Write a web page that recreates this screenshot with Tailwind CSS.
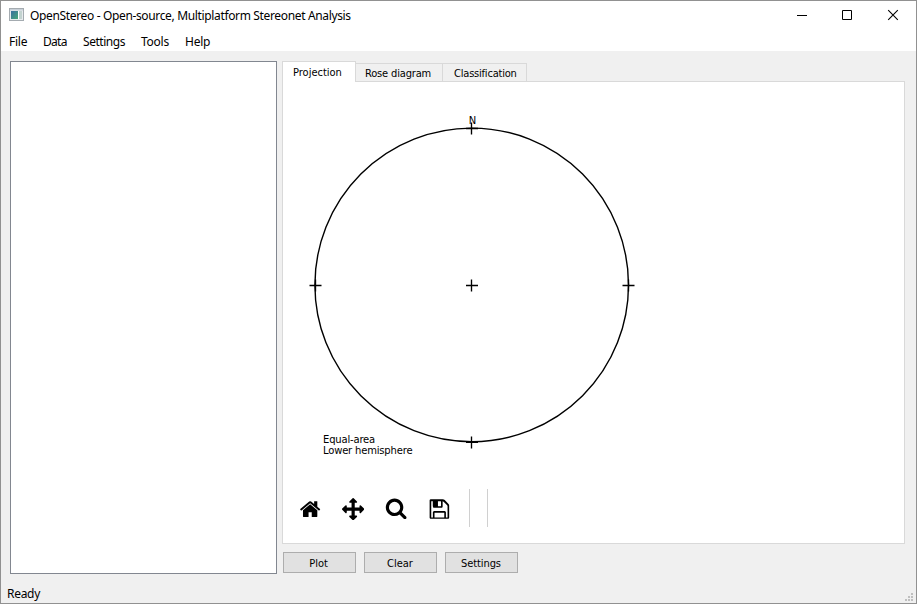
<!DOCTYPE html>
<html lang="en">
<head>
<meta charset="utf-8">
<title>OpenStereo</title>
<script src="https://cdn.jsdelivr.net/npm/@tailwindcss/browser@4"></script>
</head>
<body class="w-[917px] h-[604px] overflow-hidden">
<div class="relative w-[917px] h-[604px] bg-[#f0f0f0] border border-[#919191] flex flex-col text-black font-['Noto_Sans','Open_Sans',sans-serif] text-[12px] whitespace-nowrap">
  <header class="h-[30px] shrink-0 bg-white flex items-center justify-between pl-2">
    <div class="flex items-center">
      <svg class="w-[15px] h-[13px] mr-[6px] -mt-[3px]" viewBox="0 0 15 13">
        <defs><linearGradient id="g" x1="0" y1="0" x2="1" y2="1"><stop offset="0" stop-color="#3a6ea0"/><stop offset="1" stop-color="#48a878"/></linearGradient></defs>
        <rect x=".5" y=".5" width="14" height="12" fill="#e8ebee" stroke="#a4abb0"/>
        <rect x="1" y="1" width="13" height="1.5" fill="#c8d0d8"/>
        <rect x="2" y="3" width="7" height="8" fill="url(#g)"/>
        <rect x="9" y="3" width="1" height="8" fill="#fff"/>
        <rect x="10" y="3" width="3" height="8" fill="#c3d3d0"/>
      </svg>
      <h1 class="text-[12px] leading-4 tracking-[-0.35px]">OpenStereo - Open-source, Multiplatform Stereonet Analysis</h1>
    </div>
    <div class="flex h-full">
      <svg class="w-[46px] h-[30px]" viewBox="0 0 46 30"><path d="M19 14.5h10" stroke="#000"/></svg>
      <svg class="w-[46px] h-[30px]" viewBox="0 0 46 30"><path d="M18.5 9.5h9v9h-9z" fill="none" stroke="#000"/></svg>
      <svg class="w-[46px] h-[30px]" viewBox="0 0 46 30"><path d="M18.2 9.2l9.6 9.6M27.8 9.2l-9.6 9.6" stroke="#000" stroke-width="1.1"/></svg>
    </div>
  </header>
  <nav class="h-[20px] shrink-0 bg-white flex items-center pl-2 pt-[2px] gap-4 leading-4 tracking-[-0.25px]">
    <span class="w-[18px]">File</span><span class="w-[24px] tracking-[-0.7px]">Data</span><span class="w-[42px] tracking-[-0.45px]">Settings</span><span class="w-[28px]">Tools</span><span>Help</span>
  </nav>
  <main class="flex pt-[10px] pl-[9px] h-[523px] shrink-0">
    <section class="w-[267px] h-[513px] bg-white border border-[#828790] mr-[5px]"></section>
    <section class="w-[623px] flex flex-col font-['DejaVu_Sans_Condensed','DejaVu_Sans',sans-serif] text-[11px]">
      <div class="flex items-end h-[21px] -mb-px relative leading-[14px]">
        <div class="w-[74px] h-[21px] bg-white border border-b-0 border-[#d9d9d9] pl-[10px] pt-[4px]">Projection</div>
        <div class="w-[87px] h-[18px] mb-px border-t border-r border-[#d9d9d9] pl-[9px] pt-[3px] tracking-[-0.16px]">Rose diagram</div>
        <div class="w-[84px] h-[18px] mb-px border-t border-r border-[#d9d9d9] pl-[11px] pt-[3px] tracking-[-0.2px]">Classification</div>
      </div>
      <div class="h-[463px] bg-white border border-[#d9d9d9]">
        <svg class="block w-[621px] h-[400px]" viewBox="283 82 621 400" fill="none" stroke="#000" stroke-width="1.4">
          <circle cx="471.7" cy="284.9" r="156.8"/>
          <path d="M466 285.5h12M471.5 279.5v12M466 128.5h12M471.5 122.5v12M466 442.2h12M471.5 436.5v12M309.5 285.5h12M315.5 279.5v12M622.5 285.5h12M628.5 279.5v12" stroke-width="1.35"/>
          <g fill="#000" stroke="none" font-family="DejaVu Sans, sans-serif" font-size="10" letter-spacing="-0.18"><text x="468.8" y="124">N</text><text x="323" y="443">Equal-area</text><text x="323" y="454">Lower hemisphere</text></g>
        </svg>
        <div class="flex pl-[16px] pt-[7px]">
          <svg class="w-[22.3px] h-[22.3px] mt-[9.2px] mr-[20.7px]" viewBox="0 0 1792 1792"><path d="M1472 992v480q0 26-19 45t-45 19h-384v-384h-256v384h-384q-26 0-45-19t-19-45v-480q0-1 .5-3t.5-3l575-474 575 474q1 2 1 6zm223-69l-62 74q-8 9-21 11h-3q-13 0-21-7l-692-577-692 577q-12 8-24 7-13-2-21-11l-62-74q-8-10-7-23.5t11-21.5l719-599q32-26 76-26t76 26l244 204v-195q0-14 9-23t23-9h192q14 0 23 9t9 23v408l219 182q10 8 11 21.5t-7 23.5z"/></svg>
          <svg class="w-[22.3px] h-[22.3px] mt-[8.7px] mr-[20.7px]" viewBox="0 0 1792 1792"><path d="M1792 896q0 26-19 45l-256 256q-19 19-45 19t-45-19-19-45v-128h-384v384h128q26 0 45 19t19 45-19 45l-256 256q-19 19-45 19t-45-19l-256-256q-19-19-19-45t19-45 45-19h128v-384h-384v128q0 26-19 45t-45 19-45-19l-256-256q-19-19-19-45t19-45l256-256q19-19 45-19t45 19 19 45v128h384v-384h-128q-26 0-45-19t-19-45 19-45l256-256q19-19 45-19t45 19l256 256q19 19 19 45t-19 45-45 19h-128v384h384v-128q0-26 19-45t45-19 45 19l256 256q19 19 19 45z"/></svg>
          <svg class="w-[22.3px] h-[22.3px] mt-[8px] mr-[20.9px]" viewBox="0 0 1792 1792"><path d="M1216 832q0-185-131.5-316.5t-316.5-131.5-316.5 131.5-131.5 316.5 131.5 316.5 316.5 131.5 316.5-131.5 131.5-316.5zm512 832q0 52-38 90t-90 38q-54 0-90-38l-343-342q-179 124-399 124-143 0-273.5-55.5t-225-150-150-225-55.5-273.5 55.5-273.5 150-225 225-150 273.5-55.5 273.5 55.5 225 150 150 225 55.5 273.5q0 220-124 399l343 343q37 37 37 90z"/></svg>
          <svg class="w-[22.8px] h-[22.8px] mt-[8.7px] mr-[18.3px]" viewBox="0 0 1792 1792"><path d="M512 1536h768v-384h-768v384zm896 0h128v-896q0-14-10-38.5t-20-34.5l-281-281q-10-10-34-20t-39-10v416q0 40-28 68t-68 28h-576q-40 0-68-28t-28-68v-416h-128v1280h128v-416q0-40 28-68t68-28h832q40 0 68 28t28 68v416zm-384-928v-320q0-13-9.5-22.5t-22.5-9.5h-192q-13 0-22.5 9.5t-9.5 22.5v320q0 13 9.5 22.5t22.5 9.5h192q13 0 22.5-9.5t9.5-22.5zm640 32v896q0 40-28 68t-68 28h-1344q-40 0-68-28t-28-68v-1344q0-40 28-68t68-28h928q40 0 88 20t76 48l280 280q28 28 48 76t20 88z"/><path d="M384 256h384v384h-384z"/></svg>
          <div class="w-[19px] h-[38px] border-x border-[#d0d0d0]"></div>
        </div>
      </div>
      <div class="flex gap-2 pt-2 pl-px">
        <button class="w-[73px] h-[21px] bg-[#e1e1e1] border border-[#adadad] leading-[19px] pr-[2px] pt-px">Plot</button>
        <button class="w-[73px] h-[21px] bg-[#e1e1e1] border border-[#adadad] leading-[19px] pr-px pt-px">Clear</button>
        <button class="w-[73px] h-[21px] bg-[#e1e1e1] border border-[#adadad] leading-[19px] pr-px pt-px tracking-[-0.1px]">Settings</button>
      </div>
    </section>
  </main>
  <footer class="flex-1 flex items-end justify-between pl-[6px] pr-[3px] pb-[1px]">
    <span class="leading-4 tracking-[-0.3px]">Ready</span>
    <svg class="w-[8px] h-[8px] mb-px" viewBox="0 0 8 8" fill="#bfbfbf"><path d="M6 0h2v2h-2zM3 3h2v2h-2zM6 3h2v2h-2zM0 6h2v2h-2zM3 6h2v2h-2zM6 6h2v2h-2z"/></svg>
  </footer>
</div>
</body>
</html>
